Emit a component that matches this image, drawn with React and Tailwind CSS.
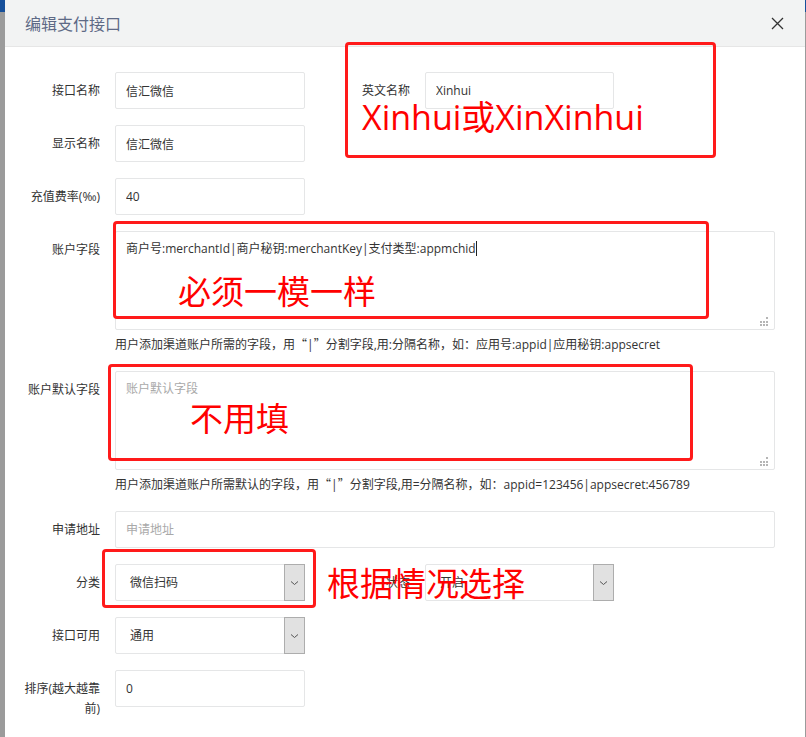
import React from 'react';

const inputCls =
    'h-[37px] border border-[#e5e6e7] rounded-[2px] px-[10px] text-[12px] text-[#333] bg-white outline-none placeholder:text-[#a9a9a9]';
const labelCls = 'w-[80px] shrink-0 text-right text-[12px] leading-[20px] text-[#333] pt-[9px]';

function Field({ label, children, className = '' }) {
    return (
        <div className={`flex items-start ${className}`}>
            <div className={labelCls}>{label}</div>
            <div className="ml-[15px]">{children}</div>
        </div>
    );
}

function Select({ value, width = 'w-[190px]' }) {
    return (
        <div className={`${width} h-[37px] flex border border-[#e5e6e7] rounded-[2px] bg-white`}>
            <div className="flex-1 pl-[14px] text-[12px] leading-[35px] text-[#333]">{value}</div>
            <div className="w-[21px] flex items-center justify-center bg-[#e1e1e1] border border-[#adadad] -m-[1px]">
                <svg width="9" height="6" viewBox="0 0 9 6">
                    <path d="M1 1.5 L4.5 4.5 L8 1.5" fill="none" stroke="#555" strokeWidth="1" />
                </svg>
            </div>
        </div>
    );
}

function Grip() {
    return (
        <svg className="absolute right-[5px] bottom-[2px]" width="10" height="10" viewBox="0 0 10 10">
            <rect x="7" y="0" width="2" height="2" fill="#b5b5b5" />
            <rect x="1" y="4" width="2" height="2" fill="#b5b5b5" />
            <rect x="7" y="4" width="2" height="2" fill="#b5b5b5" />
            <rect x="4" y="4" width="2" height="2" fill="#b5b5b5" />
            <rect x="1" y="7" width="2" height="2" fill="#b5b5b5" />
            <rect x="4" y="7" width="2" height="2" fill="#b5b5b5" />
            <rect x="7" y="7" width="2" height="2" fill="#b5b5b5" />
        </svg>
    );
}

const Q = ({ children }) => <span className="font-[family-name:'Noto_Sans_CJK_SC',sans-serif]">{children}</span>;

export default function App() {
    return (
        <div className="relative w-[806px] h-[737px] overflow-hidden flex bg-white font-[family-name:'Open_Sans','Noto_Sans_CJK_SC',sans-serif]">
            {/* page behind the modal */}
            <div className="w-[5px] shrink-0 flex flex-col bg-[#9b9b9b]">
                <div className="h-[12px] bg-[#17509a]" />
            </div>

            <div className="w-[800px] shrink-0 flex flex-col bg-white">
                {/* header */}
                <div className="h-[47px] shrink-0 flex items-center justify-between pl-[20px] pr-[21px] bg-[#f2f3f3] border-b border-[#e6e6e6]">
                    <div className="text-[16px] text-[#5e6a86] font-[family-name:'Noto_Sans_CJK_SC',sans-serif]">编辑支付接口</div>
                    <svg width="13" height="13" viewBox="0 0 13 13">
                        <path d="M1 1 L12 12 M12 1 L1 12" stroke="#333" strokeWidth="1.3" />
                    </svg>
                </div>

                {/* body */}
                <div className="pt-[25px] pl-[15px] flex flex-col">
                    <div className="flex items-start">
                        <Field label="接口名称">
                            <input className={`${inputCls} w-[190px]`} defaultValue="信汇微信" readOnly />
                        </Field>
                        <div className="w-[105px] text-right text-[12px] leading-[20px] text-[#333] pt-[9px]">英文名称</div>
                        <input className={`${inputCls} w-[189px] ml-[15px]`} defaultValue="Xinhui" readOnly />
                    </div>

                    <Field label="显示名称" className="mt-[16px]">
                        <input className={`${inputCls} w-[190px]`} defaultValue="信汇微信" readOnly />
                    </Field>

                    <Field label="充值费率(‰)" className="mt-[16px]">
                        <input className={`${inputCls} w-[190px]`} defaultValue="40" readOnly />
                    </Field>

                    <Field label="账户字段" className="mt-[16px]">
                        <div className="relative w-[660px] h-[99px] border border-[#e5e6e7] rounded-[2px] px-[10px] pt-[7px] text-[12px] leading-[20px] text-[#333]">
                            商户号:merchantId|商户秘钥:merchantKey|支付类型:appmchid
                            <span className="inline-block w-[1px] h-[15px] bg-[#222] align-[-3px]" />
                            <Grip />
                        </div>
                    </Field>
                    <div className="pl-[95px] mt-[4px] text-[12px] leading-[20px] text-[#333]">
                        用户添加渠道账户所需的字段，用<Q>“</Q>|<Q>”</Q>分割字段,用:分隔名称，如：应用号:appid|应用秘钥:appsecret
                    </div>

                    <Field label="账户默认字段" className="mt-[16px]">
                        <div className="relative w-[660px] h-[99px] border border-[#e5e6e7] rounded-[2px] px-[10px] pt-[7px] text-[12px] leading-[20px] text-[#a9a9a9]">
                            账户默认字段
                            <Grip />
                        </div>
                    </Field>
                    <div className="pl-[95px] mt-[4px] text-[12px] leading-[20px] text-[#333]">
                        用户添加渠道账户所需默认的字段，用<Q>“</Q>|<Q>”</Q>分割字段,用=分隔名称，如：appid=123456|appsecret:456789
                    </div>

                    <Field label="申请地址" className="mt-[16px]">
                        <input className={`${inputCls} w-[660px]`} placeholder="申请地址" readOnly />
                    </Field>

                    <div className="flex items-start mt-[16px]">
                        <Field label="分类">
                            <Select value="微信扫码" />
                        </Field>
                        <div className="w-[105px] text-right text-[12px] leading-[20px] text-[#333] pt-[9px]">状态</div>
                        <div className="ml-[15px]">
                            <Select value="开启" width="w-[189px]" />
                        </div>
                    </div>

                    <Field label="接口可用" className="mt-[16px]">
                        <Select value="通用" />
                    </Field>

                    <Field label="排序(越大越靠前)" className="mt-[16px]">
                        <input className={`${inputCls} w-[190px]`} defaultValue="0" readOnly />
                    </Field>
                </div>
            </div>

            <div className="w-[1px] shrink-0 flex flex-col bg-[#9b9b9b]">
                <div className="h-[12px] bg-[#17509a]" />
            </div>

            {/* red annotations */}
            <div className="absolute left-[345px] top-[42px] w-[371px] h-[116px] border-[3px] border-[#ff1a1a] rounded-[4px]" />
            <div className="absolute left-[362px] top-[92px] text-[34px] leading-[50px] text-[#ff0000] whitespace-nowrap">Xinhui或XinXinhui</div>

            <div className="absolute left-[113px] top-[221px] w-[596px] h-[98px] border-[3px] border-[#ff1a1a] rounded-[4px]" />
            <div className="absolute left-[178px] top-[268px] text-[33px] leading-[48px] text-[#ff0000] whitespace-nowrap">必须一模一样</div>

            <div className="absolute left-[108px] top-[364px] w-[585px] h-[97px] border-[3px] border-[#ff1a1a] rounded-[4px]" />
            <div className="absolute left-[190px] top-[395px] text-[33px] leading-[48px] text-[#ff0000] whitespace-nowrap">不用填</div>

            <div className="absolute left-[102px] top-[549px] w-[214px] h-[59px] border-[3px] border-[#ff1a1a] rounded-[4px]" />
            <div className="absolute left-[327px] top-[560px] text-[33px] leading-[48px] text-[#ff0000] whitespace-nowrap">根据情况选择</div>
        </div>
    );
}
